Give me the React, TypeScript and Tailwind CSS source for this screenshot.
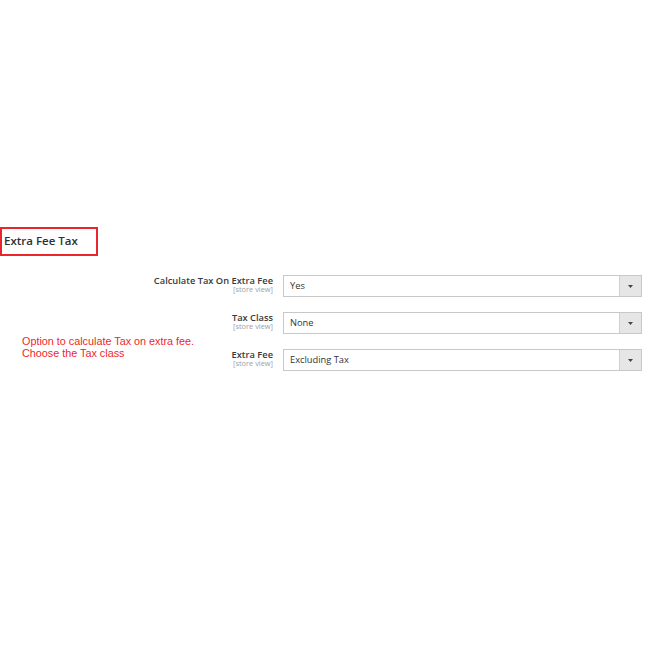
import React from "react";

const rows = [
  { label: "Calculate Tax On Extra Fee", value: "Yes" },
  { label: "Tax Class", value: "None" },
  { label: "Extra Fee", value: "Excluding Tax" },
];

function Select({ value }: { value: string }) {
  return (
    <div className="flex h-[22px] border border-[#c8c8c8] bg-white">
      <div className="flex flex-1 items-center pl-[6px] text-[9.3px] text-[#333]">{value}</div>
      <div className="flex w-[22px] items-center justify-center border-l border-[#d0d0d0] bg-[#e6e6e6]">
        <svg width="5" height="3" viewBox="0 0 5 3">
          <path d="M0 0 L5 0 L2.5 3 Z" fill="#444" />
        </svg>
      </div>
    </div>
  );
}

export default function App() {
  return (
    <div
      className="relative h-[670px] w-[670px] bg-white pt-[227px]"
      style={{ fontFamily: '"Open Sans", sans-serif' }}
    >
      <div className="h-[29px] w-[98px] border-2 border-[#e8262b] pl-[2px] pt-[4px] text-[11.5px] font-semibold leading-[16px] text-[#303030]">
        Extra Fee Tax
      </div>
      <div className="mt-[19px] grid grid-cols-[273px_1fr] gap-x-[10px] gap-y-[15px] pr-[28px]">
        {rows.map((r) => (
          <React.Fragment key={r.label}>
            <div className="flex flex-col items-end pt-[1px]">
              <span className="text-[9.3px] font-semibold leading-[10px] text-[#3a3a3a]">{r.label}</span>
              <span className="text-[7.4px] leading-[7px] text-[#a0a0a0]">[store view]</span>
            </div>
            <Select value={r.value} />
          </React.Fragment>
        ))}
      </div>
      <div
        className="absolute left-[22px] top-[336px] text-[10.8px] leading-[11.5px] text-[#f0252b]"
        style={{ fontFamily: '"Liberation Sans", Arial, sans-serif' }}
      >
        <div>Option to calculate Tax on extra fee.</div>
        <div>Choose the Tax class</div>
      </div>
    </div>
  );
}
